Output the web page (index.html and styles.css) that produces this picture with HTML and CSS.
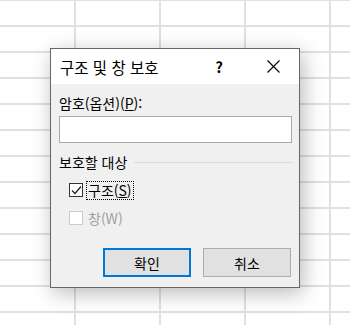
FILE: index.html
```html
<!DOCTYPE html>
<html lang="ko">
<head>
    <meta charset="UTF-8">
    <meta name="viewport" content="width=device-width, initial-scale=1.0">
    <title>구조 및 창 보호</title>
    <link rel="stylesheet" href="styles.css">
</head>
<body>
    <div class="sheet">
        <!-- Protect structure and windows dialog -->
        <div class="dialog">
            <div class="title-bar">
                <span class="title">구조 및 창 보호</span>
                <span class="title-btn help">?</span>
                <span class="title-btn close">
                    <svg width="13" height="13" viewBox="0 0 13 13">
                        <path d="M0.5 0.5 L12.5 12.5 M12.5 0.5 L0.5 12.5" stroke="#000" stroke-width="1.1" fill="none"/>
                    </svg>
                </span>
            </div>
            <div class="dialog-body">
                <label class="field-label" for="password">암호(옵션)(<u>P</u>):</label>
                <input type="password" id="password" class="text-input">

                <div class="group-heading">
                    <span>보호할 대상</span>
                    <span class="group-line"></span>
                </div>

                <div class="check-row">
                    <span class="check-box">
                        <svg width="11" height="11" viewBox="0 0 11 11">
                            <path d="M1 5.5 L4 8.5 L10 1.5" stroke="#222" stroke-width="1.3" fill="none"/>
                        </svg>
                    </span>
                    <span class="check-label focused">구조(<u>S</u>)</span>
                </div>
                <div class="check-row disabled">
                    <span class="check-box"></span>
                    <span class="check-label">창(W)</span>
                </div>

                <div class="buttons">
                    <button class="btn default">확인</button>
                    <button class="btn">취소</button>
                </div>
            </div>
        </div>
    </div>
</body>
</html>
```

FILE: styles.css
```css
body {
    margin: 0;
    padding: 0;
    font-family: "Noto Sans CJK KR", "Noto Sans", sans-serif;
    font-size: 14px;
    color: #000;
}

/* spreadsheet cells behind the dialog */
.sheet {
    position: relative;
    width: 350px;
    height: 325px;
    overflow: hidden;
    background-color: #fff;
    background-image:
        linear-gradient(to right, #e0e0e0 2px, transparent 2px),
        linear-gradient(to bottom, #e0e0e0 2px, transparent 2px);
    background-size: 85px 100%, 100% 26px;
    background-position: 74px 0, 0 25px;
}

.dialog {
    position: absolute;
    left: 50px;
    top: 48px;
    width: 248px;
    border: 1px solid #666;
    background: #f0f0f0;
    box-shadow: 3px 5px 20px rgba(0, 0, 0, 0.28);
}

.title-bar {
    display: flex;
    align-items: center;
    height: 35px;
    background: #fff;
}

.title {
    flex: 1;
    padding-left: 9px;
    font-size: 15.5px;
}

.title-btn {
    display: flex;
    justify-content: center;
    align-items: center;
    width: 40px;
    height: 35px;
}

.help {
    margin-right: 14px;
    font-size: 15px;
    font-weight: 600;
}

.close {
    margin-right: 6px;
}

.dialog-body {
    display: flex;
    flex-direction: column;
    padding: 9px 8px 10px 8px;
}

.field-label {
    height: 20px;
    line-height: 20px;
    margin-bottom: 3px;
}

.text-input {
    box-sizing: border-box;
    height: 27px;
    width: 233px;
    margin: 0;
    border: 1px solid #a8a8a8;
    background: #fff;
}

.group-heading {
    display: flex;
    align-items: center;
    height: 20px;
    margin-top: 9px;
    margin-right: -2px;
}

.group-line {
    flex: 1;
    height: 1px;
    margin-left: 7px;
    background: #dcdcdc;
}

.check-row {
    display: flex;
    align-items: center;
    height: 20px;
    margin-top: 8px;
    padding-left: 10px;
}

.check-box {
    box-sizing: border-box;
    display: flex;
    justify-content: center;
    align-items: center;
    width: 14px;
    height: 14px;
    border: 1px solid #333;
    background: #fff;
}

.check-label {
    margin-left: 4px;
    padding: 0 1px;
    line-height: 17px;
}

.focused {
    outline: 1px dotted #000;
}

.disabled .check-box {
    border-color: #cccccc;
}

.disabled .check-label {
    color: #a0a0a0;
}

.buttons {
    display: flex;
    justify-content: flex-end;
    gap: 12px;
    margin-top: 20px;
}

.btn {
    box-sizing: border-box;
    width: 88px;
    height: 29px;
    margin: 0;
    padding: 0;
    font-family: inherit;
    font-size: 14px;
    color: #000;
    background: #e1e1e1;
    border: 1px solid #adadad;
}

.btn.default {
    border: 2px solid #0078d7;
}
```
